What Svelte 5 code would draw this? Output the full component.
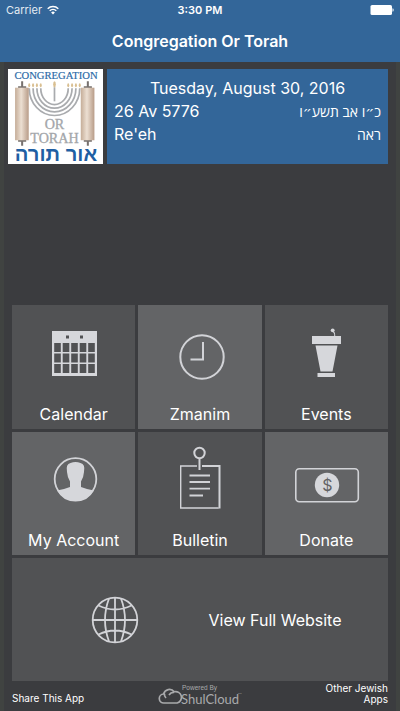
<script>
  const tiles = [
    { id: 'calendar', label: 'Calendar', light: false },
    { id: 'zmanim', label: 'Zmanim', light: true },
    { id: 'events', label: 'Events', light: false },
    { id: 'account', label: 'My Account', light: true },
    { id: 'bulletin', label: 'Bulletin', light: false },
    { id: 'donate', label: 'Donate', light: true }
  ];
  const branches = [0, 1, 2, 3];
  const columns = [0, 1, 2, 3, 4];
  const rows = [0, 1, 2];
</script>

<div class="page">
  <header>
    <div class="status">
      <span class="carrier">
        Carrier
        <svg width="12" height="10" viewBox="0 0 12 10" fill="none" stroke="#fff" stroke-width="1.5" aria-hidden="true">
          <path d="M.7 3.7a7.6 7.6 0 0 1 10.6 0M2.7 5.8a4.8 4.8 0 0 1 6.6 0" />
          <path d="M6 9.4 4.1 7.4a2.8 2.8 0 0 1 3.8 0z" fill="#fff" stroke="none" />
        </svg>
      </span>
      <span class="time">3:30 PM</span>
      <span class="battery">
        <svg width="24" height="10" viewBox="0 0 24 10" fill="#fff" aria-hidden="true">
          <rect x=".5" width="21.5" height="10" rx="1.6" />
          <path d="M22.5 3.2q1.2.3 1.2 1.8t-1.2 1.8z" />
        </svg>
      </span>
    </div>
    <h1>Congregation Or Torah</h1>
  </header>

  <main>
    <section class="intro">
      <svg class="logo" viewBox="0 0 94 94" role="img" aria-label="Congregation Or Torah logo">
        <defs>
          <linearGradient id="parchment">
            <stop offset="0" stop-color="#c5ad98" />
            <stop offset=".45" stop-color="#ecdfd2" />
            <stop offset="1" stop-color="#b89c88" />
          </linearGradient>
        </defs>
        <rect width="94" height="94" fill="#fff" />
        <text class="serif" x="47.5" y="9.5" font-size="10.5" fill="#2d6ca8" stroke="#2d6ca8" stroke-width=".2">CONGREGATION</text>
        <g fill="none" stroke="#a9abae" stroke-width="1.7">
          {#each branches as i}
            <path d="M{21 + i * 3.8} 19a{25 - i * 3.8} {27 - i * 3.6} 0 0 0 {50 - i * 7.6} 0" />
          {/each}
          <path d="M46 18v14" />
        </g>
        <g fill="#d9bf91">
          {#each branches as i}
            <ellipse cx={21 + i * 3.8} cy="16" rx="1" ry="2" />
            <ellipse cx={71 - i * 3.8} cy="16" rx="1" ry="2" />
          {/each}
          <ellipse cx="46" cy="15" rx="1.3" ry="3" />
        </g>
        <g fill="#77716e">
          <path d="M13 12h2v6h-2zM10 17h8v2h-8zM13 71h2v5h-2zM10 70h8v2h-8z" />
          <path d="M78 12h2v6h-2zM75 17h8v2h-8zM78 71h2v5h-2zM75 70h8v2h-8z" />
        </g>
        <rect x="7" y="18.5" width="13.5" height="52" fill="url(#parchment)" />
        <rect x="72" y="18.5" width="13.5" height="52" fill="url(#parchment)" />
        <g fill="#a3a6aa" stroke="#a3a6aa" stroke-width=".3">
          <text class="serif" x="46" y="59" font-size="14">OR</text>
          <text class="serif" x="46" y="73" font-size="14">TORAH</text>
        </g>
        <text class="hebrew" x="47.5" y="91" font-size="20" fill="#1f5fa3">אור תורה</text>
      </svg>
      <div class="dates">
        <p class="today">Tuesday, August 30, 2016</p>
        <p class="pair"><span>26 Av 5776</span><span class="he" lang="he" dir="rtl">כ״ו אב תשע״ו</span></p>
        <p class="pair"><span>Re'eh</span><span class="he" lang="he" dir="rtl">ראה</span></p>
      </div>
    </section>

    <nav>
      {#each tiles as tile}
        <button class="tile" class:light={tile.light}>
          <svg class="icon" viewBox="0 0 80 80" aria-hidden="true" fill="none" stroke="#d2d3d7" stroke-width="2">
            {#if tile.id === 'calendar'}
              <path d="M18 17h45v45H18z" fill="#d6d7db" stroke="none" />
              <g fill="#515254" stroke="none">
                <rect x="32" y="21.5" width="3" height="3" />
                <rect x="46" y="21.5" width="3" height="3" />
                {#each rows as r}
                  {#each columns as c}
                    <rect x={20.2 + c * 8.5} y={29 + r * 10.5} width="6.6" height="9" />
                  {/each}
                {/each}
              </g>
            {:else if tile.id === 'zmanim'}
              <circle cx="42" cy="43" r="21.7" />
              <path d="M43 28v17.5H30.5" />
            {:else if tile.id === 'events'}
              <g fill="#d6d7db" stroke="none">
                <path d="M26 22h29v8H26zM29.5 31.5h22L46.5 57.5h-12zM31.5 59h17.5v4H31.5z" />
                <circle cx="46.7" cy="16.3" r="1.9" />
              </g>
              <path d="M47 17q2 2 1.7 5" stroke-width="1.1" />
            {:else if tile.id === 'account'}
              <circle cx="41.5" cy="38" r="20.8" stroke-width="1.8" />
              <path transform="translate(.5)" d="M22.5 49.5Q30 48 35.5 46V40.5Q33 37 32.5 31Q31 23 36 22Q41 20 46 22Q51 23 49.5 31Q49 37 46.5 40.5V46Q52 48 59.5 49.5A21 21 0 0 1 22.5 49.5z" fill="#d6d7db" stroke="none" />
            {:else if tile.id === 'bulletin'}
              <circle cx="39.5" cy="12" r="5.2" />
              <path d="M39.5 17v12" />
              <path d="M37 25H20.7v42h38" stroke-width="1.4" />
              <path d="M42 25h17.5v42.5" stroke-width="2" />
              <path d="M29.5 34.5h20.5M29.5 41h20.5M29.5 47.7h20.5M29.5 54.5h13.5" stroke-width="1.8" />
            {:else}
              <rect x="9.8" y="27.8" width="62.5" height="33" rx="3.5" stroke-width="1.6" />
              <circle cx="41" cy="44" r="12.2" fill="#d6d7db" stroke="none" />
              <text class="dollar" x="41.5" y="50" font-size="16" fill="#626365" stroke="none">$</text>
            {/if}
          </svg>
          <span>{tile.label}</span>
        </button>
      {/each}
      <button class="tile wide">
        <svg width="48" height="48" viewBox="0 0 48 48" fill="none" stroke="#d2d3d7" stroke-width="1.8" aria-hidden="true">
          <circle cx="24" cy="24" r="22.3" />
          <path d="M24 2v44M2 24h44M18 2.5q-8 21.500 0 43M30 2.500q8 21.500 0 43M7.500 9.500q16.500 8 33 0M7.500 38.500q16.500-8 33 0" />
        </svg>
        <span>View Full Website</span>
      </button>
    </nav>
  </main>

  <footer>
    <a class="share" href="#share">Share This App</a>
    <a class="brand" href="#shulcloud" aria-label="Powered by ShulCloud">
      <svg width="84" height="22" viewBox="0 0 84 22" aria-hidden="true" fill="#a9aaac">
        <path d="M6 19a4.500 4.500 0 0 1-.4-9 6 6 0 0 1 10.600-2.200 4.800 4.800 0 0 1 3 11.200zM8 14q-2-2-1.500-4.500M11 11q2-3 5.300-2.500" fill="none" stroke="#a9aaac" stroke-width="1.700" />
        <text class="tiny" x="24" y="6" font-size="6.5">Powered By</text>
        <text class="shul" x="23" y="19.500" font-size="13">ShulCloud</text>
        <text class="tiny" x="80" y="10" font-size="2.500">TM</text>
      </svg>
    </a>
    <a class="other" href="#apps">Other Jewish Apps</a>
  </footer>
</div>

<style>
  :global(body) { margin: 0; background: #3b3c3e; }
  .page {
    min-height: 100vh;
    box-sizing: border-box;
    display: flex;
    flex-direction: column;
    border: solid #404341;
    border-width: 0 4px;
    background: #3b3c3f;
    color: #fff;
    font-family: Inter, "Liberation Sans", sans-serif;
    font-size: 16px;
  }
  header { height: 62px; margin: 0 -4px; background: #336699; }
  .status {
    display: grid;
    grid-template-columns: 1fr auto 1fr;
    align-items: center;
    height: 20px;
    padding: 0 6px;
    font-size: 11px;
  }
  .carrier { display: flex; align-items: center; gap: 5px; color: #e4ebf2; }
  .time { font-weight: 600; }
  .battery { display: flex; justify-content: flex-end; }
  h1 { margin: 0; font-size: 16px; font-weight: 600; line-height: 42px; text-align: center; }
  main { flex: 1; display: flex; flex-direction: column; justify-content: space-between; padding: 7px 8px 0 4px; }
  .intro { display: flex; gap: 4px; }
  .logo { width: 95px; height: 95px; flex: none; }
  .serif { font-family: "Liberation Serif", serif; text-anchor: middle; }
  .hebrew { font-family: "Liberation Sans", "DejaVu Sans", sans-serif; font-weight: 700; text-anchor: middle; }
  .dates { flex: 1; padding: 8px 7px; background: #336699; line-height: 23px; }
  p { margin: 0; }
  .today { text-align: center; }
  .pair { display: flex; justify-content: space-between; }
  .he { font-family: "Open Sans", "DejaVu Sans", sans-serif; font-size: 14px; }
  nav { display: grid; grid-template-columns: repeat(3, 1fr); gap: 3px; margin-left: 4px; }
  .tile {
    display: flex;
    flex-direction: column;
    align-items: center;
    justify-content: space-between;
    aspect-ratio: 1;
    min-width: 0;
    padding: 9px 0 5px;
    border: 0;
    background: #515254;
    color: #fff;
    font: inherit;
    line-height: 20px;
    cursor: pointer;
  }
  .light { background: #636466; }
  .icon { width: 80px; height: 80px; }
  .dollar { font-family: Inter, sans-serif; text-anchor: middle; }
  .wide {
    grid-column: 1 / -1;
    aspect-ratio: 376 / 123;
    flex-direction: row;
    justify-content: center;
    gap: 70px;
    padding: 0 0 0 32px;
  }
  footer {
    display: grid;
    grid-template-columns: 1fr auto 1fr;
    align-items: end;
    height: 30px;
    padding: 0 8px;
    font-size: 10px;
    line-height: 11px;
  }
  footer a { color: #fff; text-decoration: none; }
  .share { padding-bottom: 7px; }
  .brand { display: flex; padding-bottom: 5px; }
  .other { justify-self: end; width: 72px; padding-bottom: 6px; text-align: right; }
  .tiny { font-family: "Liberation Sans", sans-serif; }
  .shul { font-family: Lato, sans-serif; }
</style>
